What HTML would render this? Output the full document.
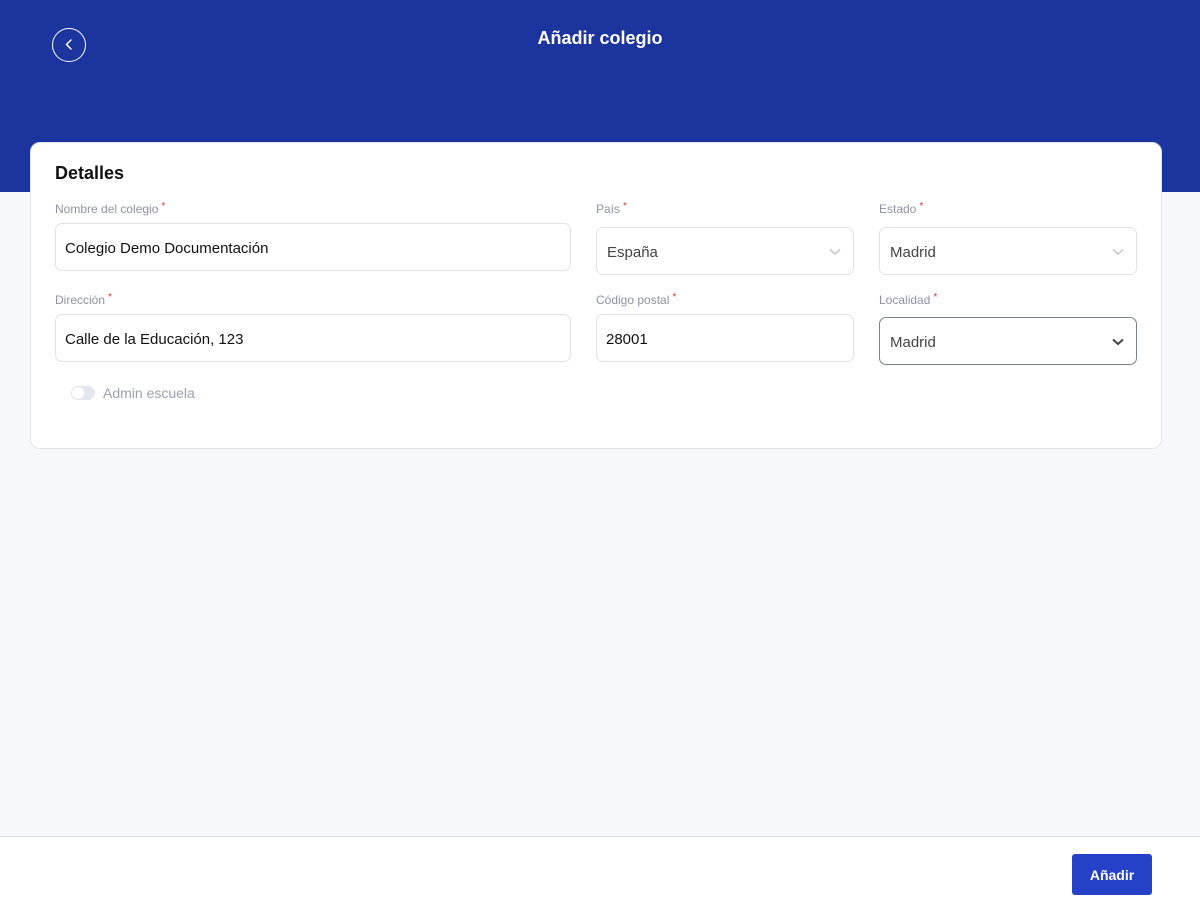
<!DOCTYPE html>
<html><head><meta charset="utf-8"><style>
*{box-sizing:border-box;margin:0;padding:0}
body{width:1200px;height:910px;background:#f7f8fc;font-family:"Liberation Sans",sans-serif;position:relative;overflow:hidden}
.hdr{position:absolute;left:0;top:0;width:1200px;height:192px;background:#1c349e}
.back{position:absolute;left:52px;top:28px;width:34px;height:34px;border:1.5px solid #fff;border-radius:50%}
.title{position:absolute;left:0;width:1200px;top:28px;text-align:center;color:#fff;font-weight:bold;font-size:18px}
.card{position:absolute;left:30px;top:142px;width:1132px;height:307px;background:#fff;border:1px solid #dfe2e8;border-radius:10px}
h2{position:absolute;left:55px;top:163px;font-size:18px;font-weight:bold;color:#111}
.lbl{position:absolute;font-size:12px;color:#8e93a3;top:0}
.lbl b{color:#e53935;font-weight:normal;font-size:10px;position:relative;top:-4px;margin-left:3px}
.in{position:absolute;height:48px;border:1px solid #dfe2e8;border-radius:7px;font-size:15px;color:#111;padding-left:9px;line-height:49px}
.sel{color:#444;padding-left:10px}
.sel svg{position:absolute;right:12px;top:20px}
.foot{position:absolute;left:0;top:836px;width:1200px;height:74px;background:#fff;border-top:1px solid #e2e4ea}
.btn{position:absolute;left:1072px;top:854px;width:80px;height:41px;background:#2441c8;border-radius:3px;color:#fff;font-weight:bold;font-size:14px;text-align:center;line-height:42px}
.tog{position:absolute;left:71px;top:386px;width:24px;height:14px;border-radius:7px;background:#e3e6ec}
.tog i{position:absolute;left:1px;top:1px;width:12px;height:12px;border-radius:50%;background:#fff}
</style></head><body>
<div class="hdr"></div>
<div class="back"><svg width="31" height="31" viewBox="0 0 31 31" style="position:absolute;left:0;top:0"><path d="M18 11 L13.5 15.5 L18 20" fill="none" stroke="#fff" stroke-width="1.5" stroke-linecap="round" stroke-linejoin="round"/></svg></div>
<div class="title">Añadir colegio</div>
<div class="card"></div>
<h2>Detalles</h2>
<div class="lbl" style="left:55px;top:202px">Nombre del colegio<b>*</b></div>
<div class="in" style="left:55px;top:223px;width:516px">Colegio Demo Documentación</div>
<div class="lbl" style="left:55px;top:293px">Dirección<b>*</b></div>
<div class="in" style="left:55px;top:314px;width:516px">Calle de la Educación, 123</div>
<div class="lbl" style="left:596px;top:202px">País<b>*</b></div>
<div class="in sel" style="left:596px;top:227px;width:258px">España<svg width="12" height="8"><path d="M1 1.5 L6 6 L11 1.5" fill="none" stroke="#c5c8cf" stroke-width="1.6"/></svg></div>
<div class="lbl" style="left:879px;top:202px">Estado<b>*</b></div>
<div class="in sel" style="left:879px;top:227px;width:258px">Madrid<svg width="12" height="8"><path d="M1 1.5 L6 6 L11 1.5" fill="none" stroke="#c5c8cf" stroke-width="1.6"/></svg></div>
<div class="lbl" style="left:596px;top:293px">Código postal<b>*</b></div>
<div class="in" style="left:596px;top:314px;width:258px">28001</div>
<div class="lbl" style="left:879px;top:293px">Localidad<b>*</b></div>
<div class="in sel" style="left:879px;top:317px;width:258px;border-color:#7a7f8c">Madrid<svg width="12" height="8"><path d="M1 1.5 L6 6 L11 1.5" fill="none" stroke="#444" stroke-width="2"/></svg></div>
<div class="tog"><i></i></div>
<div class="lbl" style="left:103px;top:385px;font-size:14px;color:#9aa0ae">Admin escuela</div>
<div class="foot"></div>
<div class="btn">Añadir</div>
</body></html>
